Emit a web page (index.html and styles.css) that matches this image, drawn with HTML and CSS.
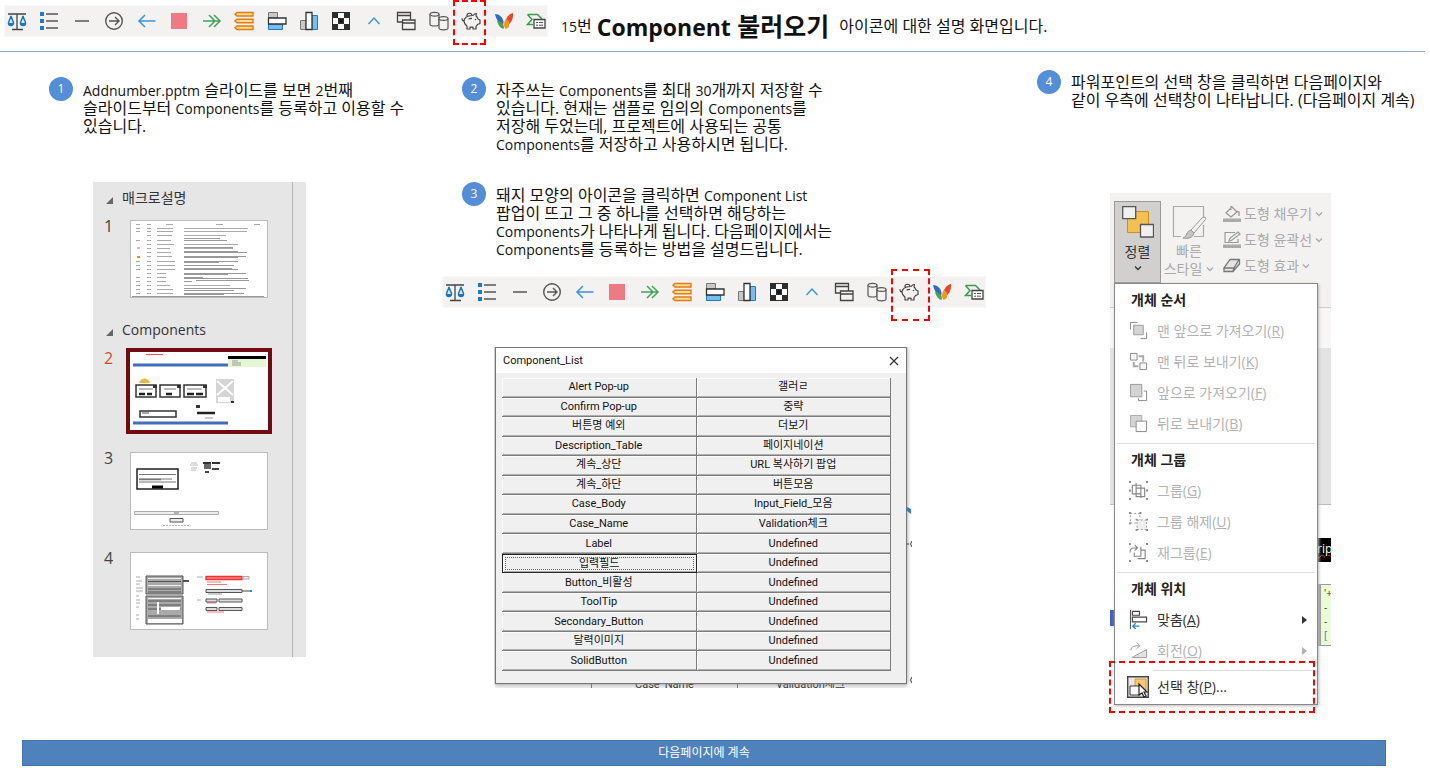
FILE: index.html
```html
<!DOCTYPE html>
<html lang="ko">
<head>
<meta charset="utf-8">
<title>Component 불러오기</title>
<link rel="stylesheet" href="styles.css">
</head>
<body>
<svg class="sprite" aria-hidden="true">
  <symbol id="i-scale" viewBox="0 0 20 20"><path d="M1 3h18M10 3v15M5 18.500h11" fill="none" stroke="#444" stroke-width="1.300"/><path d="M4 5C3 9 1.500 10 1.500 12a2.500 2.500 0 0 0 5 0C6.500 10 5 9 4 5zM16 5c-1 4-2.500 5-2.500 7a2.500 2.500 0 0 0 5 0c0-2-1.500-3-2.500-7z" fill="#d6eaf8" stroke="#1b75bb" stroke-width="1.500"/><path d="M1.500 12h5a2.500 2.500 0 0 1-5 0zM13.500 12h5a2.500 2.500 0 0 1-5 0z" fill="#1b75bb"/></symbol>
  <symbol id="i-list" viewBox="0 0 20 20"><path d="M1 1h4v4H1zM1 8h4v4H1zM1 15h4v4H1z" fill="#1e7ac4"/><path d="M7 3h12M7 10h12M7 17h12" stroke="#555" stroke-width="1.300"/></symbol>
  <symbol id="i-minus" viewBox="0 0 20 20"><path d="M3 10h14" stroke="#555" stroke-width="1.500"/></symbol>
  <symbol id="i-circle" viewBox="0 0 20 20"><g fill="none" stroke="#555" stroke-width="1.400"><circle cx="10" cy="10" r="8.300"/><path d="M5 10h10M11 6l4 4-4 4"/></g></symbol>
  <symbol id="i-left" viewBox="0 0 20 20"><path d="M18.500 10H2M8 4l-6 6 6 6" fill="none" stroke="#3b94d9" stroke-width="1.500"/></symbol>
  <symbol id="i-stop" viewBox="0 0 20 20"><path d="M2 2h16v16H2z" fill="#ee7a84"/></symbol>
  <symbol id="i-fast" viewBox="0 0 20 20"><path d="M1 10h17M7 4l6 6-6 6M12 4l6 6-6 6" fill="none" stroke="#45a35c" stroke-width="1.500"/></symbol>
  <symbol id="i-bars" viewBox="0 0 20 20"><path d="M3 1.500h16v3.500H3L1 3.200zM3 8.200h16v3.500H3l-2-1.800zM3 15h16v3.500H3l-2-1.800z" fill="#ffe08a" stroke="#e07b1a" stroke-width="1.400"/></symbol>
  <symbol id="i-align-left" viewBox="0 0 20 20"><path d="M1.500 1.500h9V7h-9z" fill="#c8c8c8" stroke="#777"/><path d="M1.500 13h14v5.500h-14z" fill="#78bdf0" stroke="#1e7ac4"/><path d="M1.500 7h17.500v6H1.500z" fill="#fff" stroke="#333" stroke-width="1.300"/></symbol>
  <symbol id="i-align-bottom" viewBox="0 0 20 20"><path d="M1.500 9.500H7v9H1.500z" fill="#c8c8c8" stroke="#777"/><path d="M13 4.500h5.500v14H13z" fill="#78bdf0" stroke="#1e7ac4"/><path d="M7 1.500h6v17H7z" fill="#fff" stroke="#333" stroke-width="1.300"/></symbol>
  <symbol id="i-checker" viewBox="0 0 20 20"><path d="M1 1h18v18H1z" fill="#2e2e2e"/><path d="M7 2h6v5H7zM2 7h5v6H2zM13 7h5v6h-5zM7 13h6v5H7z" fill="#fff"/><path d="M8.500 8.500h3v3h-3z" fill="#111"/></symbol>
  <symbol id="i-up" viewBox="0 0 20 20"><path d="M4.500 13L10 7l5.500 6" fill="none" stroke="#3b94d9" stroke-width="1.400"/></symbol>
  <symbol id="i-windows" viewBox="0 0 20 20"><g fill="#f3f2f1" stroke="#444" stroke-width="1.300"><path d="M1.500 1.500h13V11h-13zM1.500 4.500h13"/><path d="M6.500 9h12.500v9.500H6.500zM6.500 12H19"/></g></symbol>
  <symbol id="i-cyl" viewBox="0 0 20 20"><g fill="#f3f2f1" stroke="#555" stroke-width="1.200"><path d="M1 3.200v10c0 1 2 1.800 4.500 1.800S10 14.200 10 13.200v-10"/><ellipse cx="5.500" cy="3.200" rx="4.500" ry="1.900"/><path d="M10 7.500V17c0 1 2 1.800 4.500 1.800S19 18 19 17V7.500"/><ellipse cx="14.500" cy="7.500" rx="4.500" ry="1.900"/></g></symbol>
  <symbol id="i-pig" viewBox="0 0 20 20"><g fill="none" stroke="#444" stroke-width="1.200" stroke-linejoin="round"><path d="M4 7.500C5.500 5 8 4.500 12 4.500c1-1.300 2.200-2 3.500-2L15 5c1.200.8 1.800 2 2 3l2 1v3.500l-2.500 1c-.5 1-1 1.500-1.500 2V18h-3v-1.800H9V18H6v-2.800C4 13.500 3 12 3 10c0-1 .4-1.800 1-2.500zM3.200 10C1.500 10 .8 8.500 1.200 7.200"/><path d="M6 5a2.500 2.500 0 0 1 5-.5M7.500 8c1-.6 2.200-.7 3.500-.7"/></g><circle cx="14.500" cy="8.500" r=".8" fill="#444"/></symbol>
  <symbol id="i-butterfly" viewBox="0 0 20 20"><path d="M1 3c4 0 8 3 8.500 8L9 15C5 13 2 8 1 3z" fill="#2c6cc0"/><path d="M3 10c3 0 6 2 7 6l-.5 2C6 17 4 14 3 10z" fill="#46a84b"/><path d="M19 2c.5 5-1 9-6 13l-2-1c0-6 3-11 8-12z" fill="#e8452c"/><path d="M12 8c3 1 4 4 2.500 8.500L11.500 18c-2-3-2-7 .5-10z" fill="#f79321"/></symbol>
  <symbol id="i-export" viewBox="0 0 20 20"><path d="M1.500 3.500h10L16 8M1.500 3.500L6 8.500l-4.500 5H7" fill="none" stroke="#3c9a50" stroke-width="1.500"/><path d="M8 8.500h11V17H8z" fill="#fff" stroke="#444" stroke-width="1.300"/><path d="M10 11.500h2M13 11.500h4M10 14.200h2M13 14.200h4" stroke="#555"/></symbol>
  <symbol id="i-chev" viewBox="0 0 8 8"><path d="M1 2.500l3 3 3-3" fill="none" stroke="currentColor" stroke-width="1.300"/></symbol>
</svg>

<header class="top">
  <div class="toolbar" role="toolbar" aria-label="매크로 도구">
    <button aria-label="균형"><svg><use href="#i-scale"/></svg></button>
    <button aria-label="목록"><svg><use href="#i-list"/></svg></button>
    <button aria-label="선"><svg><use href="#i-minus"/></svg></button>
    <button aria-label="이동"><svg><use href="#i-circle"/></svg></button>
    <button aria-label="이전"><svg><use href="#i-left"/></svg></button>
    <button aria-label="정지"><svg><use href="#i-stop"/></svg></button>
    <button aria-label="다음"><svg><use href="#i-fast"/></svg></button>
    <button aria-label="번호"><svg><use href="#i-bars"/></svg></button>
    <button aria-label="왼쪽 맞춤"><svg><use href="#i-align-left"/></svg></button>
    <button aria-label="아래쪽 맞춤"><svg><use href="#i-align-bottom"/></svg></button>
    <button aria-label="패턴"><svg><use href="#i-checker"/></svg></button>
    <button aria-label="위로"><svg><use href="#i-up"/></svg></button>
    <button aria-label="창"><svg><use href="#i-windows"/></svg></button>
    <button aria-label="데이터"><svg><use href="#i-cyl"/></svg></button>
    <button class="marked" aria-label="Component 불러오기"><svg><use href="#i-pig"/></svg></button>
    <button aria-label="나비"><svg><use href="#i-butterfly"/></svg></button>
    <button aria-label="내보내기"><svg><use href="#i-export"/></svg></button>
  </div>
  <p class="headline"><span><span class="en">15</span>번</span><strong><span class="en">Component</span> 불러오기</strong><span>아이콘에 대한 설명 화면입니다.</span></p>
</header>

<main class="columns">
  <section class="col col-slides">
    <div class="step">
      <span class="num">1</span>
      <p><span class="en">Addnumber.pptm</span> 슬라이드를 보면 <span class="en">2</span>번째<br>슬라이드부터 <span class="en">Components</span>를 등록하고 이용할 수<br>있습니다.</p>
    </div>
    <div class="slides">
      <div class="slides-list">
        <h2>매크로설명</h2>
        <div class="slide"><span>1</span>
          <svg class="thumb" viewBox="0 0 138 78">
            <g fill="none" stroke="#aaa">
              <path stroke-width="1" d="M6 4.500h4M17 4.500h4M36 4.500h7M86 4.500h7M124 4.500h6"/>
              <path stroke="#aaa" stroke-width="1" d="M6 8.500h4M17 8.500h4M27 8.500h16M54 8.500h64M6 11.500h4M17 11.500h4M27 11.500h16M54 11.500h63M17 15.500h4M27 15.500h15M54 15.500h42M6 20.500h4M17 20.500h4M27 20.500h14M17 24.500h4M27 24.500h17M54 24.500h54M17 28.500h4M27 28.500h13M54 28.500h49M17 32.500h4M27 32.500h14M17 36.500h4M27 36.500h15M6 41.500h4M17 41.500h4M27 41.500h18M6 45.500h4M17 45.500h4M27 45.500h18M6 49.500h4M17 49.500h4M27 49.500h18M17 53.500h4M27 53.500h9M6 57.500h4M17 57.500h4M27 57.500h9M6 61.500h4M17 61.500h4M27 61.500h9M6 65.500h4M17 65.500h4M27 65.500h13M54 65.500h46M6 69.500h4M17 69.500h4M27 69.500h16M6 73.500h4M17 73.500h4M27 73.500h16"/>
              <path stroke="#999" stroke-width="1" d="M54 18.500h36M54 20.500h43M54 27.500h49M54 31.500h54M54 32.500h63M54 36.500h62M54 37.500h54M54 41.500h54M54 42.500h35M54 45.500h50M54 48.500h48M54 49.500h54M54 53.500h62M54 54.500h44M54 57.500h19M54 58.500h64M54 61.500h8M66 60.500h53M54 68.500h62M54 70.500h50M54 73.500h60M54 74.500h40"/>
            </g>
            <path d="M2 76.500h132" stroke="#999"/><path d="M7 28h3" stroke="#d66"/><path d="M7 37h3" stroke="#e90" stroke-width="2"/>
          </svg>
        </div>
        <h2>Components</h2>
        <div class="slide current"><span>2</span>
          <svg class="thumb" viewBox="0 0 138 78">
            <path d="M16 2.500h17" stroke="#e55"/><path d="M3 13h95M3 71h95" stroke="#416dbb" stroke-width="3"/>
            <path d="M98 4h38v3H98z" fill="#000"/><path d="M98 7h38v8H98z" fill="#e4f6d4"/><path d="M102 9h6M102 11h9M102 13h9" stroke="#999"/>
            <path d="M9 31c2-6 9-6 11 0z" fill="#f0b53a"/>
            <g fill="#fff" stroke="#333" stroke-width="1.500"><path d="M6 33h20v12H6zM30 33h20v12H30zM54 33h22v12H54z"/><path d="M10 65h36v-6H10z"/></g>
            <path d="M9 37h14M34 37h12M57 37h15" stroke="#777"/><path d="M9 42h6M17 42h5M36 42h6M57 42h7M66 42h7" stroke="#222" stroke-width="2.500"/>
            <path d="M23 33h4v3h-4zM47 33h4v3h-4zM73 33h4v3h-4zM66 53h4v3h-4z" fill="#333"/>
            <path d="M86 27h18v24H86z" fill="#d5d5d5"/><path d="M87 29l16 14M103 29L87 43" stroke="#fff" stroke-width="2"/><path d="M88 45h12v5H88z" fill="#fff"/><path d="M101 50h3" stroke="#333" stroke-width="2"/>
            <path d="M12 61h7" stroke="#555"/><path d="M67 61h18" stroke="#222" stroke-width="2.500"/><path d="M75 66h8" stroke="#999"/>
          </svg>
        </div>
        <div class="slide"><span>3</span>
          <svg class="thumb" viewBox="0 0 138 78">
            <path d="M7 17h41v20H7z" fill="#fff" stroke="#222" stroke-width="1.500"/><path d="M9 22.500h37M9 27h33M9 30h37" stroke="#777"/><path d="M9 27.500h22" stroke="#777" stroke-width="1.500"/><path d="M22 35h11" stroke="#000" stroke-width="3"/>
            <path d="M61 11h6M60 13h8M61 16h6M61 18h5" stroke="#bbb"/><path d="M73 11h8M82 11h8" stroke="#333" stroke-width="2"/><path d="M74 12h7v5h-7z" fill="#666"/><path d="M82 17h7M75 20h4" stroke="#444" stroke-width="2"/>
            <path d="M4.500 59.500h84v3h-84z" fill="#eee" stroke="#aaa"/><path d="M44 61h5" stroke="#777"/><path d="M40 66.500h13v3.500H40z" fill="#eee" stroke="#555"/><path d="M33 73.500h26" stroke="#bbb" stroke-dasharray="2 1"/>
          </svg>
        </div>
        <div class="slide"><span>4</span>
          <svg class="thumb" viewBox="0 0 138 78">
            <path d="M6 25h4M6 29h6M6 32h4M6 36h7M6 39h7M6 44h3M6 48h4M6 51h4M6 55h3M6 63h3M6 67h3" stroke="#aaa"/>
            <path d="M16 24h37v18H16zM16 44h37v28H16z" fill="#a9a9a9" stroke="#555"/><path d="M18 26.500h33M18 33.500h33M18 46.500h33" stroke="#eee"/><path d="M18 29.500h33M18 37h33M18 40h33M18 49h33M18 53h33M18 57h33M18 64h33" stroke="#555"/><path d="M27 50h2v12h-2zM18 67h34v4H18zM31 55h19v3H31z" fill="#fff"/><path d="M53 29h6" stroke="#555" stroke-width="2"/>
            <path d="M76 24.500h36v3H76z" fill="#f88" stroke="#e33" stroke-width="1.300"/><path d="M113 24.500h6v2.500h-6z" fill="#eee" stroke="#aaa"/><path d="M77 30h14M77 32.500h20M77 51h9M77 60h17" stroke="#f77"/><path d="M67 25h6M67 48h4" stroke="#aaa"/>
            <path d="M76 37.500h36v3H76zM76 47h11v3H76zM89 47h23v3H89zM76 55.500h11v3H76zM89 55.500h23v3H89z" fill="#ddd" stroke="#555"/><path d="M78 42h14" stroke="#999"/><path d="M112 39h8" stroke="#444"/><path d="M120 39h2" stroke="#2b8bd5" stroke-width="2"/>
          </svg>
        </div>
      </div>
    </div>
  </section>

  <section class="col col-dialog">
    <div class="step">
      <span class="num">2</span>
      <p>자주쓰는 <span class="en">Components</span>를 최대 <span class="en">30</span>개까지 저장할 수<br>있습니다. 현재는 샘플로 임의의 <span class="en">Components</span>를<br>저장해 두었는데, 프로젝트에 사용되는 공통<br><span class="en">Components</span>를 저장하고 사용하시면 됩니다.</p>
    </div>
    <div class="step">
      <span class="num">3</span>
      <p>돼지 모양의 아이콘을 클릭하면 <span class="en">Component List</span><br>팝업이 뜨고 그 중 하나를 선택하면 해당하는<br><span class="en">Components</span>가 나타나게 됩니다. 다음페이지에서는<br><span class="en">Components</span>를 등록하는 방법을 설명드립니다.</p>
    </div>
    <div class="toolbar tall-mark" role="toolbar" aria-label="아이콘 예시">
      <button aria-label="균형"><svg><use href="#i-scale"/></svg></button>
      <button aria-label="목록"><svg><use href="#i-list"/></svg></button>
      <button aria-label="선"><svg><use href="#i-minus"/></svg></button>
      <button aria-label="이동"><svg><use href="#i-circle"/></svg></button>
      <button aria-label="이전"><svg><use href="#i-left"/></svg></button>
      <button aria-label="정지"><svg><use href="#i-stop"/></svg></button>
      <button aria-label="다음"><svg><use href="#i-fast"/></svg></button>
      <button aria-label="번호"><svg><use href="#i-bars"/></svg></button>
      <button aria-label="왼쪽 맞춤"><svg><use href="#i-align-left"/></svg></button>
      <button aria-label="아래쪽 맞춤"><svg><use href="#i-align-bottom"/></svg></button>
      <button aria-label="패턴"><svg><use href="#i-checker"/></svg></button>
      <button aria-label="위로"><svg><use href="#i-up"/></svg></button>
      <button aria-label="창"><svg><use href="#i-windows"/></svg></button>
      <button aria-label="데이터"><svg><use href="#i-cyl"/></svg></button>
      <button class="marked" aria-label="Component 불러오기"><svg><use href="#i-pig"/></svg></button>
      <button aria-label="나비"><svg><use href="#i-butterfly"/></svg></button>
      <button aria-label="내보내기"><svg><use href="#i-export"/></svg></button>
    </div>
    <div class="dialog-shot">
      <div class="dialog">
        <div class="dialog-title"><span>Component_List</span><button aria-label="닫기"><svg viewBox="0 0 10 10"><path d="M1 1l8 8M9 1L1 9" stroke="#333" stroke-width="1.200"/></svg></button></div>
        <div class="choices">
          <button>Alert Pop-up</button><button>갤러ㄹ</button>
          <button>Confirm Pop-up</button><button>중략</button>
          <button>버튼명 예외</button><button>더보기</button>
          <button>Description_Table</button><button>페이지네이션</button>
          <button>계속_상단</button><button>URL 복사하기 팝업</button>
          <button>계속_하단</button><button>버튼모음</button>
          <button>Case_Body</button><button>Input_Field_모음</button>
          <button>Case_Name</button><button>Validation체크</button>
          <button>Label</button><button>Undefined</button>
          <button class="focused">입력필드</button><button>Undefined</button>
          <button>Button_비활성</button><button>Undefined</button>
          <button>ToolTip</button><button>Undefined</button>
          <button>Secondary_Button</button><button>Undefined</button>
          <button>달력이미지</button><button>Undefined</button>
          <button>SolidButton</button><button>Undefined</button>
        </div>
      </div>
      <div class="under"><span>Case_Name</span><span>Validation체크</span></div>
      <svg class="under-edge" viewBox="0 0 5 340"><path d="M0 160l4 2v5l-4-3z" fill="#2f7fc1"/><path d="M0 197h2M5 194q-3 3 0 6M5 330q-3 3 0 6" fill="none" stroke="#333"/></svg>
    </div>
  </section>

  <section class="col col-menu">
    <div class="step">
      <span class="num">4</span>
      <p>파워포인트의 선택 창을 클릭하면 다음페이지와<br>같이 우측에 선택창이 나타납니다. (다음페이지 계속)</p>
    </div>
    <div class="office">
      <div class="backdrop">
        <div class="band ribbon-bg"></div><div class="band gap-bg"></div><div class="band work-bg"></div>
        <span class="blue-chip"></span><span class="tag">ript</span><span class="note">'+<br>-<br>-<br><i>[</i></span>
      </div>
      <div class="ribbon">
        <button class="arrange">
          <svg class="big" viewBox="0 0 32 32"><path d="M5.500 5.500h21v21h-21z" fill="#f3c14f" stroke="#c98f1a"/><path d="M.7.700h13v12H.7zM18.500 18.500h13v12.500h-13z" fill="#f0f0f0" stroke="#555" stroke-width="1.300"/></svg>
          <span>정렬</span><svg class="chev"><use href="#i-chev"/></svg>
        </button>
        <button class="quick" disabled>
          <svg class="big wide" viewBox="0 0 34 34"><path d="M9 31.500H1.500v-30h30V12M31.500 20v11.500H22" fill="none" stroke="#aaa" stroke-width="1.200"/><path d="M32 12c2 0 2 2 1 3L22 28l-3-3 11-12z" fill="#f3f2f1" stroke="#999"/><path d="M19 25l3 3c-1 5-6 6-11 5 4-1 3-7 8-8z" fill="#c5c5c5" stroke="#999"/></svg>
          <span>빠른</span><span>스타일 <svg class="chev"><use href="#i-chev"/></svg></span>
        </button>
        <div class="shape-tools">
          <button disabled><svg class="ico" viewBox="0 0 18 18"><path d="M3 8l6-6 5 5-6 5zM8 5V1M13 6l3 1v4" fill="none" stroke="#999" stroke-width="1.300"/><path d="M0 13.500h18V17H0z" fill="#aaa"/></svg><span>도형 채우기</span><svg class="chev"><use href="#i-chev"/></svg></button>
          <button disabled><svg class="ico" viewBox="0 0 18 18"><path d="M12 1.500H2v10h13V8M6 10l1-3 8-6 2 2-8 6z" fill="none" stroke="#999" stroke-width="1.200"/><path d="M0 13.500h18V17H0z" fill="#aaa"/></svg><span>도형 윤곽선</span><svg class="chev"><use href="#i-chev"/></svg></button>
          <button disabled><svg class="ico" viewBox="0 0 18 18"><path d="M7 2.500h9L11 11H1zM1 11v3.500h9L11 11M10 14.500L16.500 7V2.500" fill="#e4e4e4" stroke="#777" stroke-width="1.300"/></svg><span>도형 효과</span><svg class="chev"><use href="#i-chev"/></svg></button>
        </div>
      </div>
      <div class="menu">
        <h3>개체 순서</h3>
        <button disabled><svg viewBox="0 0 20 20"><path d="M5 4.500h10v10H5z" fill="#d4d4d4" stroke="#999"/><path d="M9 1.500H1.500V9M18.500 12v6.500H12" fill="none" stroke="#888"/></svg><span>맨 앞으로 가져오기(<u>R</u>)</span></button>
        <button disabled><svg viewBox="0 0 20 20"><path d="M1.500 1.500h7v7h-7zM11.500 11.500h7v7h-7z" fill="#f6f6f6" stroke="#888"/><path d="M10 4.500h5V10M5 10.500V15h5" fill="none" stroke="#aaa" stroke-width="2"/></svg><span>맨 뒤로 보내기(<u>K</u>)</span></button>
        <button disabled><svg viewBox="0 0 20 20"><path d="M1.500 1.500h12v13h-12z" fill="#d4d4d4" stroke="#999"/><path d="M15.500 8.500h3v10H10V16" fill="none" stroke="#888"/></svg><span>앞으로 가져오기(<u>F</u>)</span></button>
        <button disabled><svg viewBox="0 0 20 20"><path d="M1.500 1.500h12v12h-12z" fill="#d4d4d4" stroke="#aaa"/><path d="M7.500 7.500h11v11h-11z" fill="#fff" stroke="#888"/></svg><span>뒤로 보내기(<u>B</u>)</span></button>
        <hr>
        <h3>개체 그룹</h3>
        <button disabled><svg viewBox="0 0 20 20"><path d="M3.500 4.500h9v9h-9zM7.500 7.500h9v9h-9zM7.500 2v5M12.500 14v4" fill="none" stroke="#888" stroke-width="1.200"/><path d="M0 0h2v2H0zM18 0h2v2h-2zM0 18h2v2H0zM18 18h2v2h-2zM0 9h2v2H0zM18 9h2v2h-2z" fill="#888"/></svg><span>그룹(<u>G</u>)</span></button>
        <button disabled><svg viewBox="0 0 20 20"><path d="M1.500 1.500h10v10h-10z" fill="none" stroke="#999" stroke-dasharray="2 2"/><path d="M8.500 8.500h10v10h-10z" fill="#eee" stroke="#999" stroke-dasharray="2 2"/><path d="M0 0h2v2H0zM11 0h2v2h-2zM0 11h2v2H0zM7 7h2v2H7zM18 7h2v2h-2zM7 18h2v2H7zM18 18h2v2h-2z" fill="#888"/></svg><span>그룹 해제(<u>U</u>)</span></button>
        <button disabled><svg viewBox="0 0 20 20"><path d="M1 10c0-5 3-5 8-5M6 2l3 3-3 3M5.500 10v4h7V4M9 16.500h8v-9h-4" fill="none" stroke="#888" stroke-width="1.200"/><path d="M0 0h2v2H0zM18 0h2v2h-2zM0 18h2v2H0zM18 18h2v2h-2z" fill="#888"/></svg><span>재그룹(<u>E</u>)</span></button>
        <hr>
        <h3>개체 위치</h3>
        <button><svg viewBox="0 0 20 20"><path d="M1.500 0v20" stroke="#444"/><path d="M3.500 1.500H11v4H3.500zM3.500 7.500h15v5h-15z" fill="#fff" stroke="#444" stroke-width="1.200"/><path d="M11 17H4M7 14l-3 3 3 3" fill="none" stroke="#1e86d0" stroke-width="1.300"/></svg><span>맞춤(<u>A</u>)</span><b class="arrow"></b></button>
        <button disabled><svg viewBox="0 0 20 20"><path d="M2 10c0-5 5-5 9-5M8 1.500L11.500 5 8 8" fill="none" stroke="#999"/><path d="M3 17.500h15.500V9z" fill="#e2e2e2" stroke="#999"/></svg><span>회전(<u>O</u>)</span><b class="arrow"></b></button>
        <hr class="inset">
        <button class="pane"><svg viewBox="0 0 22 22"><path d="M.7.700h20.600v20.600H.7z" fill="#eceae8" stroke="#444" stroke-width="1.400"/><path d="M8 3h11v11H8z" fill="#f5c877" stroke="#d99a34"/><path d="M3 10h10v9H3z" fill="#fff" stroke="#333"/><path d="M12 8v11l3-2 2 4 2-1-2-4h3z" fill="#fff" stroke="#222" stroke-width="1.200"/></svg><span>선택 창(<u>P</u>)...</span></button>
      </div>
      <div class="menu-mark"></div>
    </div>
  </section>
</main>

<footer class="next">다음페이지에 계속</footer>
</body>
</html>
```
FILE: styles.css
```css
* { box-sizing: border-box; }

body {
  margin: 0;
  background: #fff;
  color: #111;
  font: 16px/18px "Open Sans", "Noto Sans CJK KR", sans-serif;
}

p, h2, h3 { margin: 0; }
button { margin: 0; padding: 0; border: 0; background: none; color: inherit; font: inherit; }
svg { display: block; }
.sprite { position: absolute; width: 0; height: 0; }
.en { font-size: 14px; line-height: 14px; }

/* Header */
.top {
  display: flex;
  align-items: center;
  height: 52px;
  margin-right: 5px;
  padding: 0 0 9px 4px;
  border-bottom: 1px solid #8ea9d0;
}

.toolbar {
  display: flex;
  flex: none;
  justify-content: space-between;
  align-items: center;
  width: 544px;
  height: 32px;
  padding: 0 1px 0 2px;
  background: #f3f2f1;
  border: 1px solid #f8f8f8;
}
.toolbar button { position: relative; width: 20px; height: 20px; }
.toolbar svg { width: 20px; height: 20px; }
.marked::after {
  content: "";
  position: absolute;
  inset: -11px -5px -14px -8px;
  border: 2px dashed #f00;
}
.tall-mark .marked::after { inset: -13px -11px -19px -8px; }

.headline { display: flex; align-items: center; padding: 10px 0 0 13px; white-space: nowrap; }
.headline strong { margin: 0 10px 0 5px; font-size: 25px; line-height: 28px; }
.headline strong .en { font-size: 23px; }

/* Columns */
.columns { display: grid; grid-template-columns: 442fr 568fr 420fr; }
.col { padding-top: 25px; }

.step { display: flex; gap: 10px; white-space: nowrap; }
.step p { padding-top: 4px; }
.num {
  flex: none;
  width: 24px;
  height: 24px;
  border-radius: 50%;
  background: #548dd8;
  color: #fff;
  font-size: 12px;
  line-height: 24px;
  text-align: center;
}
.col-slides .step { padding-left: 49px; }

/* Slide list */
.slides {
  width: 213px;
  margin: 47px 0 0 93px;
  padding-right: 13px;
  background: #e6e6e6;
}
.slides-list { padding: 6px 0 27px 11px; border-right: 1px solid #b5b5b5; }
.slides h2 {
  display: flex;
  align-items: center;
  gap: 9px;
  height: 20px;
  margin-bottom: 12px;
  color: #333;
  font-size: 14px;
  font-weight: 400;
}
.slides h2::before {
  content: "";
  margin: 4px 0 0 2px;
  border-left: 7px solid transparent;
  border-bottom: 7px solid #666;
}
.slide { display: flex; margin-bottom: 22px; color: #444; line-height: 12px; }
.slide:last-child { margin-bottom: 0; }
.slide span { width: 26px; }
.thumb { width: 138px; height: 78px; background: #fff; outline: 1px solid #bbb; outline-offset: -1px; }
.current span { color: #d24f2c; }
.current .thumb { outline: 4px solid #720a12; outline-offset: 0; }

/* Component list dialog */
.col-dialog .step { padding-left: 20px; }
.col-dialog .step + .step { margin-top: 29px; }
.col-dialog .toolbar { margin-top: 18px; }

.dialog-shot {
  position: relative;
  width: 418px;
  margin: 39px 0 0 52px;
  padding: 0 5px 0 1px;
  overflow: hidden;
  font-family: Roboto, "Noto Sans CJK KR", sans-serif;
  font-size: 11px;
}
.dialog { position: relative; background: #f0f0f0; border: 1px solid #777; box-shadow: 0 0 4px #888; }
.dialog-title {
  display: flex;
  justify-content: space-between;
  align-items: center;
  height: 25px;
  padding: 0 7px;
  background: #fff;
}
.dialog-title svg { width: 10px; height: 10px; }
.choices {
  display: grid;
  grid-template-columns: 1fr 1fr;
  grid-auto-rows: 1fr;
  height: 293px;
  margin: 5px 15px 12px 6px;
}
.choices button {
  min-height: 0;
  border: solid #7c7c7c;
  border-width: 0 1px 1px 0;
  box-shadow: inset 1px 1px #fafafa, inset 0 -1px #b0b0b0;
  line-height: 16px;
}
.choices .focused { border: 1px solid #222; outline: 1px dotted #666; outline-offset: -4px; }
.under { display: flex; height: 4px; overflow: hidden; background: #eee; line-height: 1px; color: #333; }
.under span { width: 146px; border-left: 1px solid #777; text-align: center; }
.under::before { content: ""; width: 96px; }
.under-edge { position: absolute; top: 0; right: 0; width: 5px; height: 340px; }

/* Ribbon and menu */
.col-menu { padding-top: 18px; }
.col-menu .step { padding-left: 27px; }
.col-menu .step p { padding-top: 3px; }
.office {
  position: relative;
  width: 221px;
  margin: 84px 0 0 100px;
  padding: 8px 0 8px 4px;
  color: #333;
  font-size: 14px;
}
.backdrop { position: absolute; inset: 0; overflow: hidden; }
.ribbon-bg { height: 115px; background: #f3f2f1; border-bottom: 1px solid #ccc; }
.gap-bg { height: 40px; background: #f8f7f6; }
.work-bg { height: 157px; background: #e3e3e3; border-bottom: 1px solid #bbb; }
.blue-chip { position: absolute; left: 0; top: 417px; width: 5px; height: 16px; background: #4060c8; }
.tag {
  position: absolute;
  left: 207px;
  top: 345px;
  width: 14px;
  height: 24px;
  overflow: hidden;
  background: #000;
  color: #fff;
  font-size: 12px;
  line-height: 22px;
  text-decoration: underline wavy #d33 1px;
}
.note {
  position: absolute;
  left: 207px;
  top: 391px;
  width: 14px;
  height: 62px;
  overflow: hidden;
  border: 1px solid #999;
  border-width: 1px 0 1px 4px;
  background: #eafbd8;
  padding: 1px 0 0 3px;
  font-size: 10px;
  line-height: 14px;
  white-space: nowrap;
}
.note i { color: #2b7fc0; font-style: normal; }

.ribbon { position: relative; display: flex; height: 82px; color: #aaa; }
.ribbon .chev { width: 8px; height: 8px; }
.ribbon .big { width: 32px; height: 32px; }
.ribbon .wide { width: 34px; height: 34px; }
.arrange {
  display: flex;
  flex-direction: column;
  align-items: center;
  width: 47px;
  padding-top: 4px;
  border: 1px solid #999;
  background: #d2d0ce;
  color: #333;
}
.arrange span { margin: 5px 0 3px; }
.quick { display: flex; flex-direction: column; align-items: center; width: 56px; padding-top: 4px; }
.quick span { display: flex; align-items: center; gap: 4px; white-space: nowrap; }
.quick span:first-of-type { margin-top: 3px; }
.shape-tools { display: flex; flex-direction: column; padding-left: 6px; }
.shape-tools button { display: flex; align-items: center; gap: 3px; height: 26px; white-space: nowrap; }
.ico { width: 18px; height: 18px; }

.menu {
  position: relative;
  width: 204px;
  padding-bottom: 2px;
  border: 1px solid #888;
  background: #fff;
  box-shadow: 1px 1px 3px #bbb;
}
.menu h3 { padding-left: 16px; color: #222; font-size: 14px; line-height: 31px; }
.menu button {
  display: flex;
  align-items: center;
  width: 100%;
  height: 31px;
  padding-left: 14px;
  gap: 9px;
}
.menu button:disabled { color: #b3b3b3; }
.menu svg { width: 19px; height: 19px; }
.menu hr { height: 1px; margin: 4px 2px 0; border: 0; background: #ddd; }
.menu .inset { margin-left: 38px; }
.menu .pane { padding-left: 12px; gap: 8px; }
.menu .pane svg { width: 22px; height: 22px; }
.arrow { margin: 0 10px 0 auto; border: 4px solid transparent; border-left: 5px solid currentColor; border-right: 0; }
.menu-mark { position: absolute; left: -1px; bottom: 0; width: 206px; height: 52px; border: 2px dashed #f00; }

/* Footer */
.next {
  margin: 27px 44px 0 22px;
  border: 1px solid #4474b0;
  background: #4f81bd;
  color: #fff;
  font-size: 12px;
  line-height: 24px;
  text-align: center;
}
```
